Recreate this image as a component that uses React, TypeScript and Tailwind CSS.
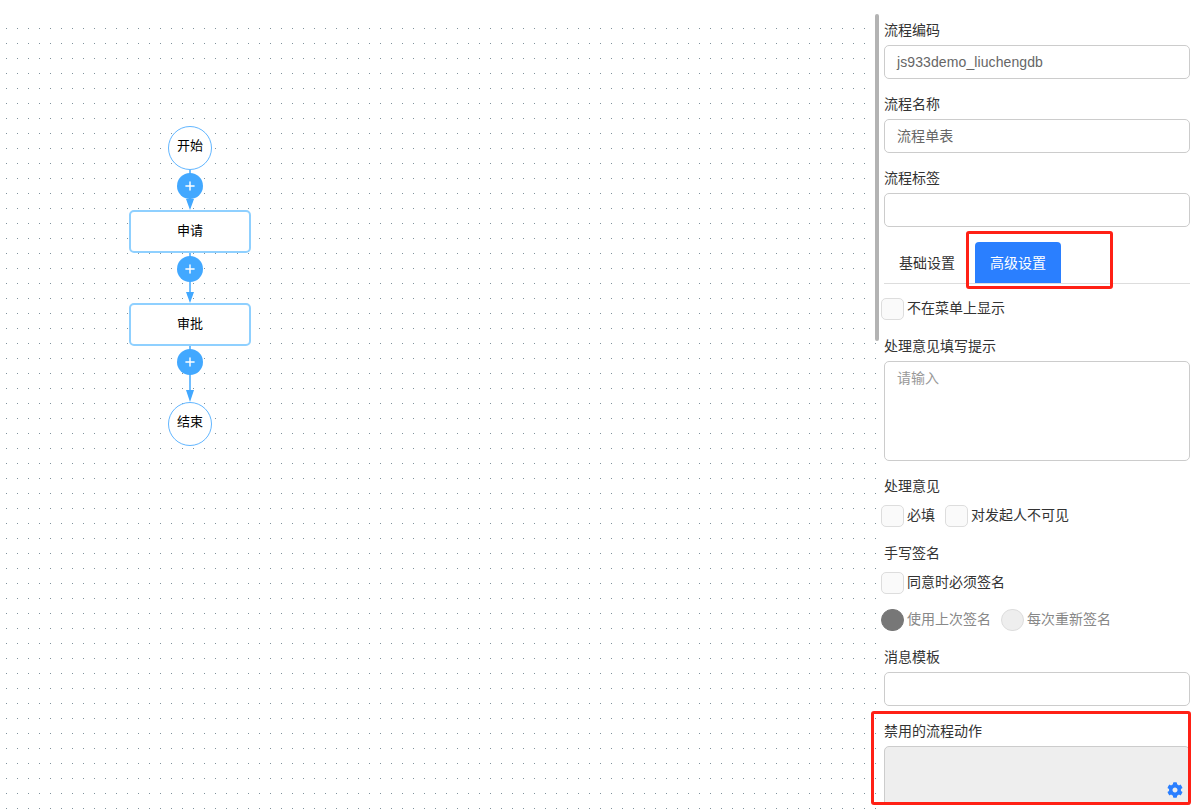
import { Plus } from "lucide-react";
import { FaCog } from "react-icons/fa";

const FONT = { fontFamily: '"Liberation Sans", "Noto Sans CJK SC", sans-serif' };

function Label({ text, className = "" }: { text: string; className?: string }) {
  return <div className={`h-5 text-sm leading-5 text-[#333] ${className}`}>{text}</div>;
}

function TextInput({ value }: { value?: string }) {
  return (
    <div className="mt-[5px] h-[34px] rounded-[5px] border border-[#ccc] bg-white px-3 text-sm leading-8 tracking-[0.1px] text-[#666]">
      {value}
    </div>
  );
}

function Check({ text, className = "" }: { text: string; className?: string }) {
  return (
    <div className={`flex h-[22px] items-center ${className}`}>
      <span className="h-[22px] w-[23px] shrink-0 rounded-[5px] border border-[#ddd] bg-[#fafafa]" />
      <span className="mb-[2px] ml-[3px] text-sm leading-5 text-[#333]">{text}</span>
    </div>
  );
}

function Radio({ text, on, className = "" }: { text: string; on?: boolean; className?: string }) {
  return (
    <div className={`flex h-[22px] items-center ${className}`}>
      <span
        className={`h-[22px] w-[23px] shrink-0 rounded-full border ${
          on ? "border-[#777] bg-[#777]" : "border-[#ddd] bg-[#eee]"
        }`}
      />
      <span className="mb-[2px] ml-[3px] text-sm leading-5 text-[#888]">{text}</span>
    </div>
  );
}

function PlusButton({ y }: { y: number }) {
  return (
    <div
      className="absolute left-[177px] flex h-[26px] w-[26px] items-center justify-center rounded-full bg-[#42a8ff] text-white"
      style={{ top: y - 13 }}
    >
      <Plus size={14} strokeWidth={2.5} />
    </div>
  );
}

function CircleNode({ text, y }: { text: string; y: number }) {
  return (
    <div
      className="absolute left-[168px] flex h-[44px] w-[44px] items-center justify-center rounded-full border border-[#62b6ff] bg-white pb-[5px] text-[13px] text-black"
      style={{ top: y }}
    >
      {text}
    </div>
  );
}

function BoxNode({ text, y }: { text: string; y: number }) {
  return (
    <div
      className="absolute left-[129px] flex h-[43px] w-[122px] items-center justify-center rounded-[5px] border-2 border-[#8fd0ff] bg-white pb-[2px] text-[13px] text-black"
      style={{ top: y }}
    >
      {text}
    </div>
  );
}

function FlowCanvas() {
  return (
    <div className="relative h-full w-[876px] shrink-0 overflow-hidden bg-white">
      <svg className="absolute left-0 top-0" width="876" height="812">
        <defs>
          <pattern id="dots" x="6" y="28" width="11" height="15" patternUnits="userSpaceOnUse">
            <rect width="1" height="1" fill="#7f929c" />
          </pattern>
        </defs>
        <rect x="0" y="20" width="876" height="792" fill="url(#dots)" />
        <g stroke="#42a8ff" strokeWidth="1.5" fill="#42a8ff">
          <line x1="190" y1="170" x2="190" y2="200" />
          <line x1="190" y1="253" x2="190" y2="293" />
          <line x1="190" y1="346" x2="190" y2="391" />
        </g>
        <g fill="#42a8ff">
          <polygon points="186,199 194,199 190,210" />
          <polygon points="186,292 194,292 190,303" />
          <polygon points="186,390 194,390 190,402" />
        </g>
      </svg>
      <CircleNode text="开始" y={126} />
      <PlusButton y={186} />
      <BoxNode text="申请" y={210} />
      <PlusButton y={269} />
      <BoxNode text="审批" y={303} />
      <PlusButton y={362} />
      <CircleNode text="结束" y={402} />
    </div>
  );
}

function SidePanel() {
  return (
    <div className="relative h-full flex-1 bg-white pl-2 pr-[5px] pt-5">
      <div className="absolute left-[-1px] top-[14px] h-[327px] w-1 rounded-full bg-[#b3b3b3]" />

      <Label text="流程编码" />
      <TextInput value="js933demo_liuchengdb" />
      <Label text="流程名称" className="mt-[15px]" />
      <TextInput value="流程单表" />
      <Label text="流程标签" className="mt-[15px]" />
      <TextInput />

      <div className="relative mt-[15px] flex h-[42px] items-end border-b border-[#ddd] pl-[15px] text-sm">
        <div className="flex h-[41px] w-[57px] items-center text-[#333]">基础设置</div>
        <div className="ml-[19px] flex h-[41px] w-[86px] items-center justify-center rounded-t-[4px] bg-[#2a7fff] text-white">
          高级设置
        </div>
        <div className="absolute left-[82px] top-[-11px] h-[58px] w-[147px] rounded-[3px] border-[3px] border-[#ff2015]" />
      </div>

      <Check text="不在菜单上显示" className="-ml-[3px] mt-[14px]" />

      <Label text="处理意见填写提示" className="mt-4" />
      <div className="mt-[5px] h-[100px] rounded-[5px] border border-[#ccc] bg-white px-3 py-[6px] text-sm leading-5 text-[#999]">
        请输入
      </div>

      <Label text="处理意见" className="mt-[15px]" />
      <div className="-ml-[3px] mt-[9px] flex">
        <Check text="必填" />
        <Check text="对发起人不可见" className="ml-[10px]" />
      </div>

      <Label text="手写签名" className="mt-4" />
      <Check text="同意时必须签名" className="-ml-[3px] mt-[9px]" />

      <div className="-ml-[3px] mt-[15px] flex">
        <Radio text="使用上次签名" on />
        <Radio text="每次重新签名" className="ml-[10px]" />
      </div>

      <Label text="消息模板" className="mt-4" />
      <TextInput />

      <div className="relative">
        <Label text="禁用的流程动作" className="mt-[15px]" />
        <div className="relative mt-[5px] h-[59px] rounded-t-[5px] border border-[#ccc] bg-[#eee]">
          <FaCog className="absolute bottom-[6px] right-[6px] text-[#2a7fff]" size={16} />
        </div>
        <div className="absolute left-[-13px] right-[-1px] top-[-10px] h-[94px] rounded-[3px] border-[3px] border-[#ff2015]" />
      </div>
    </div>
  );
}

export default function App() {
  return (
    <div className="flex h-[812px] w-full overflow-hidden bg-white" style={FONT}>
      <FlowCanvas />
      <SidePanel />
    </div>
  );
}
